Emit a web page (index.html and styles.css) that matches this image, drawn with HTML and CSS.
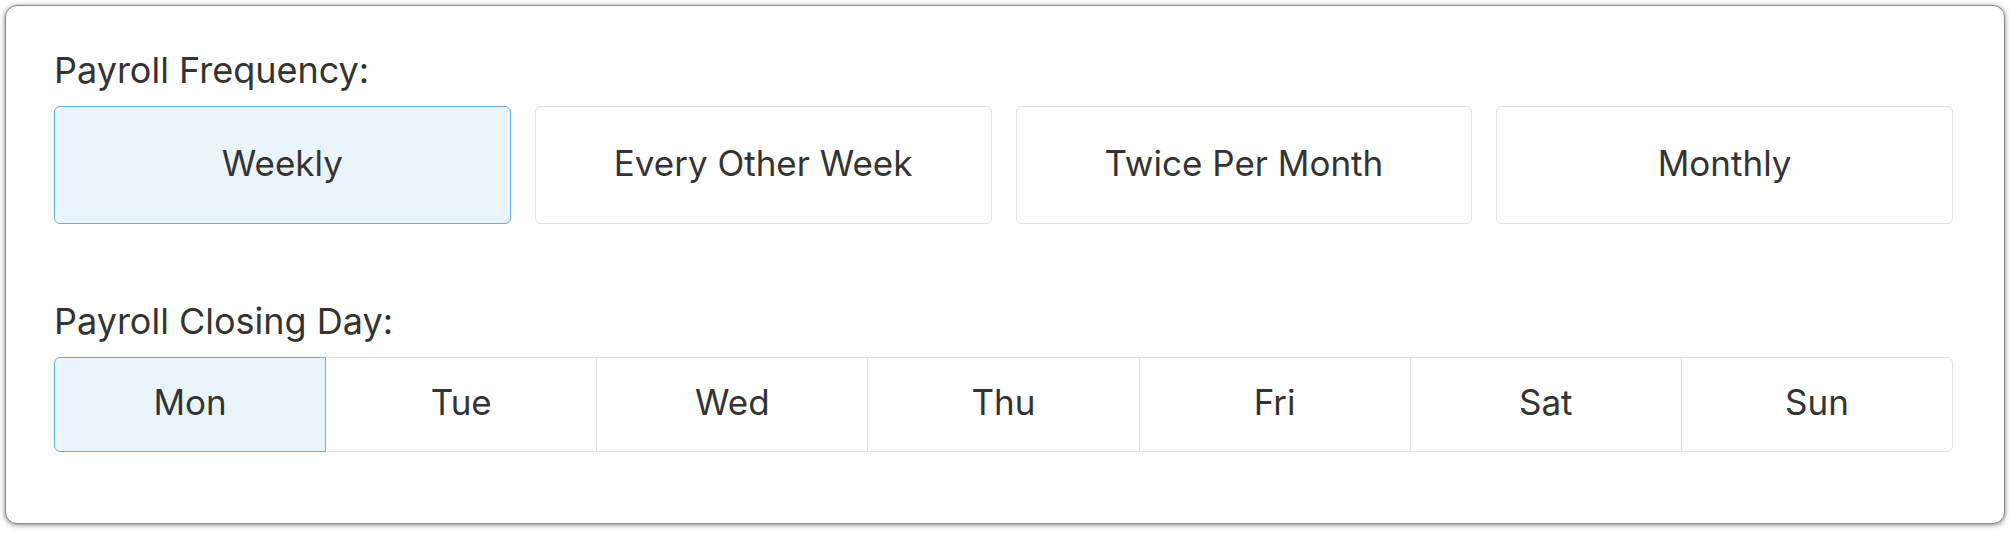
FILE: index.html
```html
<!DOCTYPE html>
<html lang="en">
<head>
    <meta charset="UTF-8">
    <meta name="viewport" content="width=device-width, initial-scale=1.0">
    <title>Payroll Settings</title>
    <link rel="stylesheet" href="styles.css">
</head>
<body>

    <div class="card">
        <div class="field">
            <label class="field-label">Payroll Frequency:</label>
            <div class="choices">
                <button class="choice selected">Weekly</button>
                <button class="choice">Every Other Week</button>
                <button class="choice">Twice Per Month</button>
                <button class="choice">Monthly</button>
            </div>
        </div>

        <div class="field">
            <label class="field-label">Payroll Closing Day:</label>
            <div class="day-group">
                <button class="day selected">Mon</button>
                <button class="day">Tue</button>
                <button class="day">Wed</button>
                <button class="day">Thu</button>
                <button class="day">Fri</button>
                <button class="day">Sat</button>
                <button class="day">Sun</button>
            </div>
        </div>
    </div>

</body>
</html>
```

FILE: styles.css
```css
body {
    font-family: Inter, "Liberation Sans", sans-serif;
    margin: 0;
    padding: 5px 8px 10px 5px;
    background-color: #ffffff;
    color: #333333;
}
.card {
    background-color: white;
    border: 1px solid #888888;
    border-radius: 12px;
    box-shadow: 0 1px 5px rgba(0, 0, 0, 0.5);
    padding: 44px 51px 71px 48px;
}
.field-label {
    display: block;
    font-size: 36px;
    line-height: 40px;
    margin-bottom: 16px;
}
.field + .field {
    margin-top: 77px;
}
.choices {
    display: flex;
    gap: 24px;
}
.choice {
    flex: 1;
    height: 118px;
    padding-bottom: 5px;
    font-family: inherit;
    font-size: 35px;
    color: #333333;
    background-color: white;
    border: 1px solid #e0e0e0;
    border-radius: 6px;
    cursor: pointer;
}
.day-group {
    display: flex;
}
.day {
    flex: 1;
    height: 95px;
    padding-bottom: 7px;
    margin-left: -1px;
    font-family: inherit;
    font-size: 35px;
    color: #333333;
    background-color: white;
    border: 1px solid #e0e0e0;
    cursor: pointer;
}
.day:first-child {
    margin-left: 0;
    border-radius: 6px 0 0 6px;
}
.day:last-child {
    border-radius: 0 6px 6px 0;
}
.choice.selected,
.day.selected {
    position: relative;
    z-index: 1;
    background-color: #eaf4fb;
    border-color: #68b0e4;
}
```
